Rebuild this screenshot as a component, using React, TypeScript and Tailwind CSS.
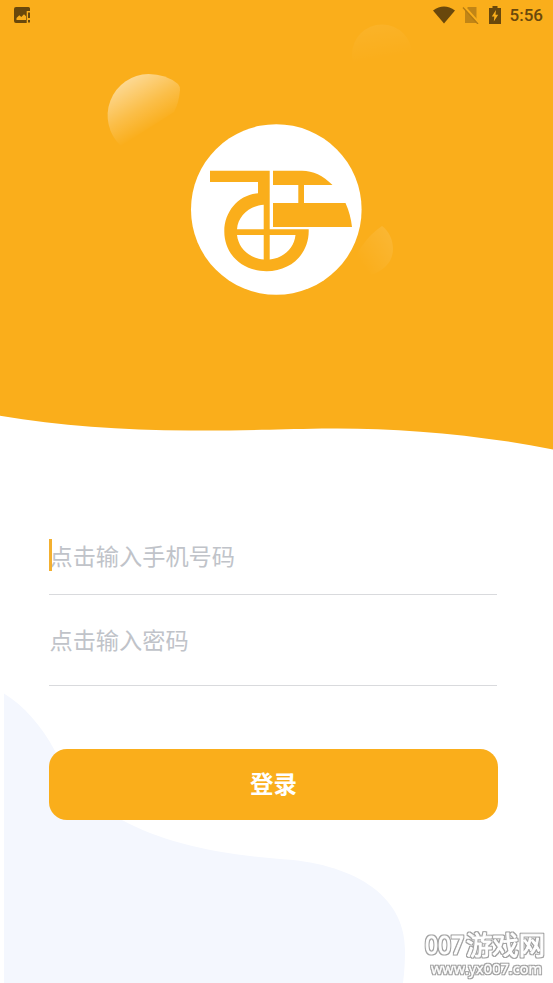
import { useState } from 'react';

function StatusBar() {
  return (
    <div className="flex h-[30px] items-center justify-between pl-3.5 pr-[10px]">
      <svg width="17" height="16" viewBox="0 0 17 16">
        <path d="M2 0H14.500Q16 0 16 1.500V4H12.700V16H2Q0 16 0 14V2Q0 0 2 0Z" fill="#69480c" />
        <path d="M2.500 13v-2l2.800-2.800 2 1.700L10 7.200l2 2V13Z" fill="#faae1b" />
        <path d="M14 5.500h2v5.500h-2zM14 13h2v2.500h-2z" fill="#69480c" />
      </svg>
      <div className="flex items-center">
        <svg width="22" height="18" viewBox="0 0 22 18">
          <path d="M0 4.500Q11-3.500 22 4.500L11 17.600Z" fill="#69480c" />
        </svg>
        <svg className="ml-[7px]" width="18" height="18" viewBox="0 0 18 18">
          <path d="M6 1h8.500v16H3V4Z" fill="#c18516" />
          <path d="M2 .5 17 17" stroke="#faae1b" strokeWidth="2.500" />
          <path d="M1 1.500 16 18" stroke="#b47b14" strokeWidth="1.300" />
        </svg>
        <svg className="ml-[9px]" width="12" height="18" viewBox="0 0 12 18">
          <path d="M3.500 0h5v2H12v16H0V2h3.500Z" fill="#69480c" />
          <path d="M7 4 2.800 10.500h2.500L4.800 15.500 9.200 8.800H6.500Z" fill="#faae1b" />
        </svg>
        <span className="ml-[9px] font-['Roboto',sans-serif] text-[17px] font-medium leading-none text-[#69480c]">
          5:56
        </span>
      </div>
    </div>
  );
}

function HeaderBackground() {
  return (
    <svg className="absolute inset-0" width="553" height="452" viewBox="0 0 553 452">
      <defs>
        <linearGradient id="bubbleA" gradientUnits="userSpaceOnUse" x1="124" y1="78" x2="153" y2="128">
          <stop offset="0" stopColor="#fff" stopOpacity="0.56" />
          <stop offset="0.600" stopColor="#fff" stopOpacity="0.2" />
          <stop offset="1" stopColor="#fff" stopOpacity="0" />
        </linearGradient>
        <linearGradient id="bubbleB" gradientUnits="userSpaceOnUse" x1="378" y1="24" x2="384" y2="58">
          <stop offset="0" stopColor="#fff" stopOpacity="0.06" />
          <stop offset="1" stopColor="#fff" stopOpacity="0" />
        </linearGradient>
        <linearGradient id="bubbleC" gradientUnits="userSpaceOnUse" x1="392" y1="240" x2="360" y2="262">
          <stop offset="0" stopColor="#fff" stopOpacity="0.1" />
          <stop offset="1" stopColor="#fff" stopOpacity="0" />
        </linearGradient>
      </defs>
      <path
        d="M0 0H553V449.500C470 433 390 427.500 322 428.500C268 429.500 235 430.800 190 430.500C120 430.200 60 425.500 0 415.700Z"
        fill="#faae1b"
      />
      <path d="M178 84Q180 86 180 90Q179 103 174 112L121 146A41.500 41.500 0 0 1 148.500 74Q166 74 178 84Z" fill="url(#bubbleA)" />
      <circle cx="382" cy="54.500" r="30" fill="url(#bubbleB)" />
      <path d="M382 226C389 231 393 240 393 249C393 264 380 277 352 278Q352 258 362 246Q370 234 382 226Z" fill="url(#bubbleC)" />
    </svg>
  );
}

function Logo() {
  return (
    <svg width="173" height="172" viewBox="190 124 173 172">
      <circle cx="276.300" cy="209.500" r="85.300" fill="#fff" />
      <g fill="#faae1b">
        <path
          fillRule="evenodd"
          d="M210 170.700H269.700V229.300H308.700C309.500 254 291 271.200 266.500 271.200C242 271.200 224.300 254 224.300 231.500C224.300 211 239 194.500 258 193.300V182H210ZM263.700 204.700C249 206 238 216 237 229.300H263.700ZM237 235C238.500 248.500 249.500 258.200 263.700 259.500V235ZM269.700 235V259.500C283.500 258 294 248.500 295.500 235Z"
        />
        <path d="M273 170.700H302C313 170.700 323 175.500 332.500 185H304V203H345.500Q350.500 214 352 227H273V203H298.300V185H273Z" />
      </g>
    </svg>
  );
}

function Field({ placeholder, focused = false, className }: { placeholder: string; focused?: boolean; className: string }) {
  const [value, setValue] = useState('');

  return (
    <label className={`relative flex border-b border-[#d9dadd] ${className}`}>
      {focused && <span className="absolute left-0 top-0 h-8 w-[3px] bg-[#f3b030]" />}
      <input
        className="h-[33px] w-full bg-transparent pl-[0.5px] text-[23.2px] leading-[33px] text-gray-800 caret-[#faae1b] outline-none placeholder:text-[#c0c3c9]"
        placeholder={placeholder}
        value={value}
        onChange={(e) => setValue(e.target.value)}
      />
    </label>
  );
}

function Watermark() {
  return (
    <svg className="absolute bottom-0 right-0" width="143" height="63" viewBox="410 920 143 63">
      <defs>
        <filter id="outline" x="-5%" y="-10%" width="110%" height="120%" colorInterpolationFilters="sRGB">
          <feMorphology in="SourceAlpha" operator="dilate" radius="1" result="grown" />
          <feFlood floodColor="#a0a0a0" />
          <feComposite in2="grown" operator="in" result="edge" />
          <feMerge>
            <feMergeNode in="edge" />
            <feMergeNode in="SourceGraphic" />
          </feMerge>
        </filter>
      </defs>
      <g
        fill="#fff"
        stroke="#fff"
        strokeLinejoin="round"
        fontFamily="'Open Sans', 'Noto Sans CJK SC', sans-serif"
        filter="url(#outline)"
      >
        <text x="425" y="954" fontSize="26" strokeWidth="1" textLength="39" lengthAdjust="spacingAndGlyphs">
          007
        </text>
        <text x="466" y="955" fontSize="26" strokeWidth="0.900" textLength="79" lengthAdjust="spacingAndGlyphs">
          游戏网
        </text>
        <text x="431" y="974" fontSize="14" strokeWidth="0.400" textLength="111" lengthAdjust="spacingAndGlyphs">
          www.yx007.com
        </text>
      </g>
    </svg>
  );
}

export default function App() {
  return (
    <div className="relative h-[983px] w-[553px] overflow-hidden bg-white font-['Noto_Sans_CJK_SC',sans-serif]">
      <svg className="absolute bottom-0 left-0" width="420" height="300" viewBox="0 683 420 300">
        <path
          d="M4 693.500C24 706 41 725 55 751C72 784 92 806 122 820C162 842 215 854 280 859C350 863 405 893 405 950Q405 968 403 983H4Z"
          fill="#f4f7fe"
        />
      </svg>

      <header className="relative h-[452px]">
        <HeaderBackground />
        <div className="relative">
          <StatusBar />
          <div className="flex justify-center pt-[94px]">
            <Logo />
          </div>
        </div>
      </header>

      <form className="relative ml-[49px] mt-[87px] w-[449px]" onSubmit={(e) => e.preventDefault()}>
        <Field placeholder="点击输入手机号码" focused className="mr-px h-14" />
        <Field placeholder="点击输入密码" className="mr-px mt-7 h-[63px]" />
        <button
          type="submit"
          className="mt-[63px] flex h-[71px] w-full items-center justify-center rounded-[18px] bg-[#faae1b] pb-px text-[23.5px] font-bold text-white"
        >
          登录
        </button>
      </form>

      <Watermark />
    </div>
  );
}
